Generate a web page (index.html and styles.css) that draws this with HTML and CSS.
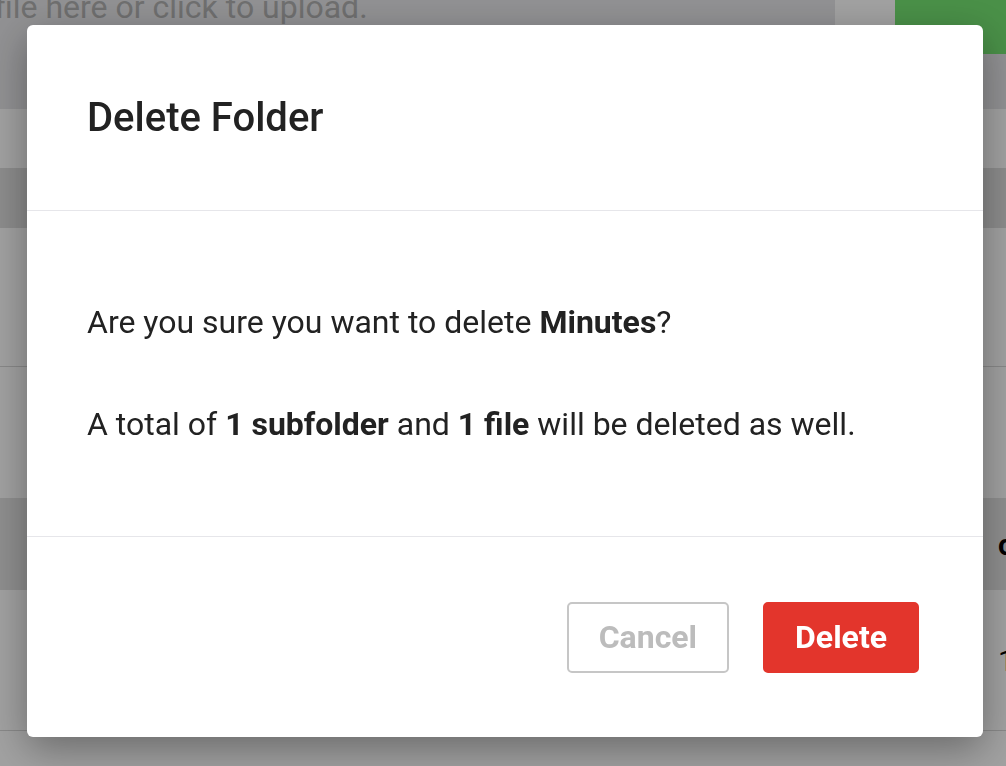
FILE: index.html
```html
<!DOCTYPE html>
<html lang="en">
<head>
<meta charset="utf-8">
<title>Delete Folder</title>
<link rel="stylesheet" href="styles.css">
</head>
<body>
<div class="page">
  <div class="dropzone">
    <span class="dropzone-text">file here or click to upload.</span>
    <span class="dropzone-btn"></span>
    <span class="dropzone-upload"></span>
  </div>
  <div class="toolbar"></div>
  <div class="table">
    <div class="row row-head"><span class="cell"></span></div>
    <div class="row row-tall"><span class="cell"></span></div>
    <div class="row row-mid"><span class="cell"></span></div>
    <div class="row row-folder"><span class="cell cell-bold">c</span></div>
    <div class="row row-tall row-last"><span class="cell">1</span></div>
    <div class="row row-tall"><span class="cell"></span></div>
  </div>
</div>

<div class="overlay">
  <div class="modal" role="dialog" aria-labelledby="modal-title">
    <div class="modal-header">
      <h2 id="modal-title" class="modal-title">Delete Folder</h2>
    </div>
    <div class="modal-body">
      <p>Are you sure you want to delete <strong>Minutes</strong>?</p>
      <p>A total of <strong>1 subfolder</strong> and <strong>1 file</strong> will be deleted as well.</p>
    </div>
    <div class="modal-footer">
      <button class="btn btn-cancel" type="button">Cancel</button>
      <button class="btn btn-delete" type="button">Delete</button>
    </div>
  </div>
</div>
</body>
</html>
```

FILE: styles.css
```css
* { box-sizing: border-box; }

html, body {
  margin: 0;
  padding: 0;
  height: 100%;
  overflow: hidden;
}

body {
  font-family: Roboto, "Liberation Sans", Arial, sans-serif;
  background: #ffffff;
  color: #222222;
}

/* ---------- underlying page ---------- */
.page {
  width: 1006px;
  height: 766px;
  overflow: hidden;
}

.dropzone {
  height: 109px;
  background: #e6e6e9;
  display: flex;
  align-items: flex-start;
}

.dropzone-text {
  font-size: 32px;
  line-height: 14px;
  color: #b0b0b0;
  margin-left: -5px;
  white-space: nowrap;
  flex: 1;
  overflow: hidden;
  height: 26px;
}

.dropzone-btn {
  width: 60px;
  height: 40px;
  background: #ffffff;
}

.dropzone-upload {
  width: 111px;
  height: 54px;
  background: #75e472;
}

.toolbar {
  height: 59px;
  background: #ffffff;
}

.table {
  display: flex;
  flex-direction: column;
}

.row {
  display: grid;
  grid-template-columns: 998px 1fr;
  align-items: center;
  background: #ffffff;
  overflow: hidden;
}

.row::before { content: ""; }

.row-head { height: 60px; background: #dedede; }
.row-tall { height: 139px; border-bottom: 1px solid #d8d8d8; }
.row-mid { height: 131px; }
.row-folder { height: 92px; background: #e2e2e2; }
.row-last { height: 141px; }

.cell {
  font-size: 30px;
  color: #000000;
  white-space: nowrap;
}

.cell-bold { font-weight: 700; }

/* ---------- modal ---------- */
.overlay {
  position: fixed;
  inset: 0;
  background: rgba(0, 0, 0, 0.37);
  display: flex;
  align-items: flex-start;
  padding: 25px 0 0 27px;
}

.modal {
  width: 956px;
  height: 712px;
  background: #ffffff;
  border-radius: 6px;
  box-shadow: 0 12px 40px rgba(0, 0, 0, 0.35);
  display: flex;
  flex-direction: column;
}

.modal-header {
  height: 186px;
  border-bottom: 1px solid #e6e6ea;
  display: flex;
  align-items: center;
  padding: 0 60px;
}

.modal-title {
  margin: 0;
  font-size: 40px;
  font-weight: 500;
  line-height: 48px;
  color: #222222;
}

.modal-body {
  height: 326px;
  border-bottom: 1px solid #e6e6ea;
  padding: 89px 60px 0;
  font-size: 32px;
  line-height: 44px;
  color: #222222;
}

.modal-body p {
  margin: 0 0 58px;
}

.modal-body strong { font-weight: 700; }

.modal-footer {
  flex: 1;
  display: flex;
  align-items: center;
  justify-content: flex-end;
  gap: 34px;
  padding: 0 64px 0 60px;
}

.btn {
  font-family: inherit;
  font-size: 32px;
  font-weight: 700;
  line-height: 38px;
  height: 71px;
  border-radius: 5px;
  border: 2px solid transparent;
  padding: 0 30px;
  cursor: pointer;
}

.btn-cancel {
  background: #ffffff;
  border-color: #c6c6c6;
  color: #bcbcbc;
}

.btn-delete {
  background: #e3352c;
  border-color: #e3352c;
  color: #ffffff;
}
```
